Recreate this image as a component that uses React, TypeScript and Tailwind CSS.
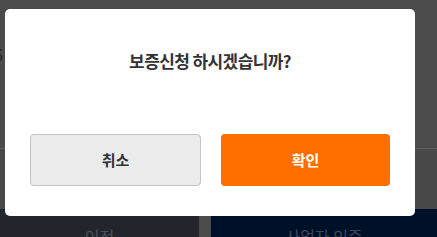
export default function App() {
  return (
    <div
      className="relative w-[437px] h-[237px] overflow-hidden bg-[#4b4b4b]"
      style={{ fontFamily: '"Noto Sans CJK KR", "Noto Sans", sans-serif' }}
    >
      {/* Page behind the dim */}
      <div className="flex h-[149px] flex-col border-b border-[#5e5e5e] pt-[42px]">
        <span className="-ml-[6px] text-[16px] leading-[24px] text-[#222]">6</span>
      </div>
      <div className="h-[60px] bg-[#484848]" />
      <div className="flex h-[28px]">
        <div className="flex w-[199px] justify-center bg-[#22262c] pt-[15px] text-[16px] text-[#4d5058]">
          이전
        </div>
        <div className="w-[12px] bg-[#4b4b4b]" />
        <div className="flex flex-1 justify-center bg-[#001029] pt-[15px] text-[16px] text-[#3c4657]">
          사업자 인증
        </div>
      </div>

      {/* Modal */}
      <div className="absolute left-[5px] top-[9px] flex w-[410px] flex-col rounded-[5px] bg-white px-[25px] pb-[30px] pt-[40px]">
        <p className="text-center text-[17px] font-bold leading-[24px] tracking-[-0.6px] text-[#333]">
          보증신청 하시겠습니까?
        </p>
        <div className="mt-[61px] flex gap-[20px]">
          <button className="h-[52px] flex-1 rounded-[4px] border border-[#c4c4c4] bg-[#ebebeb] text-[15px] font-bold text-[#333]">
            취소
          </button>
          <button className="h-[52px] flex-1 rounded-[4px] bg-[#ff6f00] text-[15px] font-bold text-white">
            확인
          </button>
        </div>
      </div>
    </div>
  );
}
